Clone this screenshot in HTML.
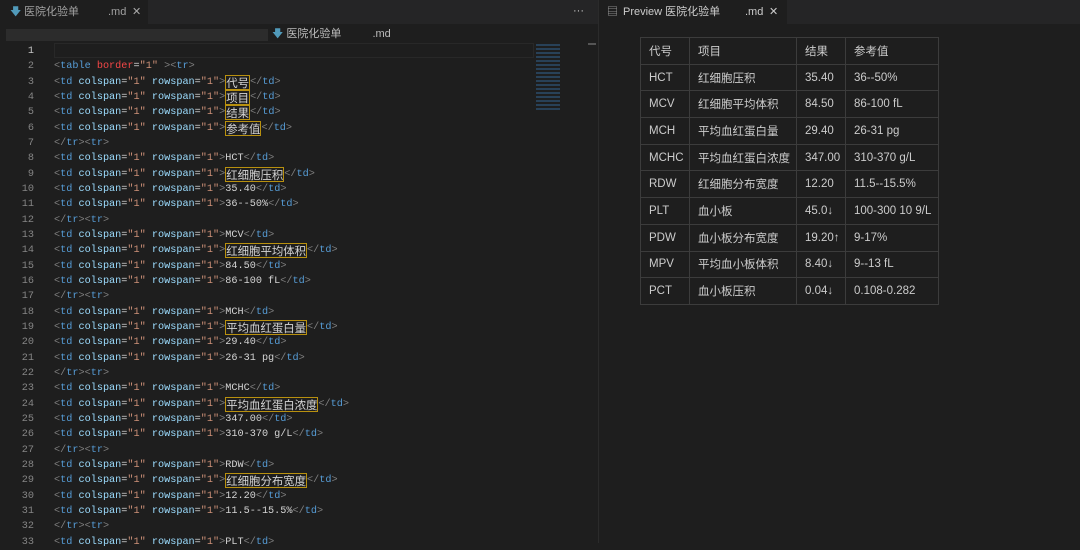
<!DOCTYPE html>
<html><head><meta charset="utf-8"><style>
*{margin:0;padding:0;box-sizing:border-box}
body{width:1080px;height:543px;background:#1e1e1e;overflow:hidden;position:relative;font-family:"Liberation Sans","Noto Sans CJK SC",sans-serif}
.tabbar{position:absolute;left:0;top:0;height:24px;background:#252526}
.tab{position:absolute;top:0;height:24px;background:#1e1e1e;color:#cccccc;font-size:11px;line-height:24px}
.crumb{position:absolute;top:24px;left:0;width:598px;height:19px;background:#1e1e1e}
.code{position:absolute;left:0;top:44px;width:590px;font-family:"Liberation Mono","Noto Sans CJK SC",monospace;font-size:10.2px;line-height:15.33px;color:#d4d4d4;white-space:pre}
.code div{height:15.33px;overflow:visible}
.ln{display:inline-block;width:34px;text-align:right;color:#858585;margin-right:20px}
.b{color:#808080}.t{color:#569cd6}.a{color:#9cdcfe}.s{color:#ce9178}.r{color:#f44747}
.c{display:inline-block;height:15px;line-height:14px;vertical-align:top;font-family:"Noto Sans CJK SC",sans-serif;font-size:11.4px;border:1px solid #b8900f;color:#d4d4d4}
table{position:absolute;left:640px;top:37px;width:298px;table-layout:fixed;border-collapse:collapse;color:#cccccc;font-size:11.5px}
td{border:1px solid #3c3c3c;height:26.7px;padding:0 0 0 8px;white-space:nowrap;overflow:hidden}
</style></head><body>
<div class="tabbar" style="width:598px"></div>
<div class="tabbar" style="left:599px;width:481px"></div>
<div class="tab" style="left:0;width:148px"><span style="color:#519aba;position:absolute;left:10px">&#129095;</span><span style="position:absolute;left:24px;color:#a0a0a0">医院化验单</span><span style="position:absolute;left:108px;color:#a0a0a0">.md</span><span style="position:absolute;left:132px;color:#aaa">✕</span></div>
<div style="position:absolute;left:573px;top:0;color:#ccc;font-size:11px;line-height:22px">···</div>
<div class="tab" style="left:599px;width:188px"><span style="position:absolute;left:8px;color:#aaa">▤</span><span style="position:absolute;left:24px">Preview 医院化验单</span><span style="position:absolute;left:146px">.md</span><span style="position:absolute;left:170px">✕</span></div>
<div class="crumb"></div>
<div style="position:absolute;left:6px;top:29px;width:262px;height:12px;background:#2c2c2c"></div>
<div style="position:absolute;left:272px;top:24px;height:20px;font-size:11px;color:#bbb;line-height:20px"><span style="color:#519aba">&#129095;</span> 医院化验单 <span style="margin-left:28px">.md</span></div>
<div style="position:absolute;left:598px;top:0;width:1px;height:543px;background:#2b2b2b"></div>
<div style="position:absolute;left:536px;top:44px;width:24px;height:66px;background:repeating-linear-gradient(#2a4a66 0 2px,transparent 2px 4px);opacity:.8"></div>
<div style="position:absolute;left:588px;top:43px;width:8px;height:2px;background:#555"></div>
<div style="position:absolute;left:54px;top:43px;width:480px;height:15px;border:1px solid #282828"></div>
<div class="code"><div><span class="ln" style="color:#c6c6c6">1</span></div><div><span class="ln">2</span><span class="b">&lt;</span><span class="t">table</span> <span class="r">border</span>=<span class="s">"1"</span> <span class="b">&gt;&lt;</span><span class="t">tr</span><span class="b">&gt;</span></div><div><span class="ln">3</span><span class="b">&lt;</span><span class="t">td</span> <span class="a">colspan</span>=<span class="s">"1"</span> <span class="a">rowspan</span>=<span class="s">"1"</span><span class="b">&gt;</span><span class="c">代号</span><span class="b">&lt;/</span><span class="t">td</span><span class="b">&gt;</span></div><div><span class="ln">4</span><span class="b">&lt;</span><span class="t">td</span> <span class="a">colspan</span>=<span class="s">"1"</span> <span class="a">rowspan</span>=<span class="s">"1"</span><span class="b">&gt;</span><span class="c">项目</span><span class="b">&lt;/</span><span class="t">td</span><span class="b">&gt;</span></div><div><span class="ln">5</span><span class="b">&lt;</span><span class="t">td</span> <span class="a">colspan</span>=<span class="s">"1"</span> <span class="a">rowspan</span>=<span class="s">"1"</span><span class="b">&gt;</span><span class="c">结果</span><span class="b">&lt;/</span><span class="t">td</span><span class="b">&gt;</span></div><div><span class="ln">6</span><span class="b">&lt;</span><span class="t">td</span> <span class="a">colspan</span>=<span class="s">"1"</span> <span class="a">rowspan</span>=<span class="s">"1"</span><span class="b">&gt;</span><span class="c">参考值</span><span class="b">&lt;/</span><span class="t">td</span><span class="b">&gt;</span></div><div><span class="ln">7</span><span class="b">&lt;/</span><span class="t">tr</span><span class="b">&gt;&lt;</span><span class="t">tr</span><span class="b">&gt;</span></div><div><span class="ln">8</span><span class="b">&lt;</span><span class="t">td</span> <span class="a">colspan</span>=<span class="s">"1"</span> <span class="a">rowspan</span>=<span class="s">"1"</span><span class="b">&gt;</span>HCT<span class="b">&lt;/</span><span class="t">td</span><span class="b">&gt;</span></div><div><span class="ln">9</span><span class="b">&lt;</span><span class="t">td</span> <span class="a">colspan</span>=<span class="s">"1"</span> <span class="a">rowspan</span>=<span class="s">"1"</span><span class="b">&gt;</span><span class="c">红细胞压积</span><span class="b">&lt;/</span><span class="t">td</span><span class="b">&gt;</span></div><div><span class="ln">10</span><span class="b">&lt;</span><span class="t">td</span> <span class="a">colspan</span>=<span class="s">"1"</span> <span class="a">rowspan</span>=<span class="s">"1"</span><span class="b">&gt;</span>35.40<span class="b">&lt;/</span><span class="t">td</span><span class="b">&gt;</span></div><div><span class="ln">11</span><span class="b">&lt;</span><span class="t">td</span> <span class="a">colspan</span>=<span class="s">"1"</span> <span class="a">rowspan</span>=<span class="s">"1"</span><span class="b">&gt;</span>36--50%<span class="b">&lt;/</span><span class="t">td</span><span class="b">&gt;</span></div><div><span class="ln">12</span><span class="b">&lt;/</span><span class="t">tr</span><span class="b">&gt;&lt;</span><span class="t">tr</span><span class="b">&gt;</span></div><div><span class="ln">13</span><span class="b">&lt;</span><span class="t">td</span> <span class="a">colspan</span>=<span class="s">"1"</span> <span class="a">rowspan</span>=<span class="s">"1"</span><span class="b">&gt;</span>MCV<span class="b">&lt;/</span><span class="t">td</span><span class="b">&gt;</span></div><div><span class="ln">14</span><span class="b">&lt;</span><span class="t">td</span> <span class="a">colspan</span>=<span class="s">"1"</span> <span class="a">rowspan</span>=<span class="s">"1"</span><span class="b">&gt;</span><span class="c">红细胞平均体积</span><span class="b">&lt;/</span><span class="t">td</span><span class="b">&gt;</span></div><div><span class="ln">15</span><span class="b">&lt;</span><span class="t">td</span> <span class="a">colspan</span>=<span class="s">"1"</span> <span class="a">rowspan</span>=<span class="s">"1"</span><span class="b">&gt;</span>84.50<span class="b">&lt;/</span><span class="t">td</span><span class="b">&gt;</span></div><div><span class="ln">16</span><span class="b">&lt;</span><span class="t">td</span> <span class="a">colspan</span>=<span class="s">"1"</span> <span class="a">rowspan</span>=<span class="s">"1"</span><span class="b">&gt;</span>86-100 fL<span class="b">&lt;/</span><span class="t">td</span><span class="b">&gt;</span></div><div><span class="ln">17</span><span class="b">&lt;/</span><span class="t">tr</span><span class="b">&gt;&lt;</span><span class="t">tr</span><span class="b">&gt;</span></div><div><span class="ln">18</span><span class="b">&lt;</span><span class="t">td</span> <span class="a">colspan</span>=<span class="s">"1"</span> <span class="a">rowspan</span>=<span class="s">"1"</span><span class="b">&gt;</span>MCH<span class="b">&lt;/</span><span class="t">td</span><span class="b">&gt;</span></div><div><span class="ln">19</span><span class="b">&lt;</span><span class="t">td</span> <span class="a">colspan</span>=<span class="s">"1"</span> <span class="a">rowspan</span>=<span class="s">"1"</span><span class="b">&gt;</span><span class="c">平均血红蛋白量</span><span class="b">&lt;/</span><span class="t">td</span><span class="b">&gt;</span></div><div><span class="ln">20</span><span class="b">&lt;</span><span class="t">td</span> <span class="a">colspan</span>=<span class="s">"1"</span> <span class="a">rowspan</span>=<span class="s">"1"</span><span class="b">&gt;</span>29.40<span class="b">&lt;/</span><span class="t">td</span><span class="b">&gt;</span></div><div><span class="ln">21</span><span class="b">&lt;</span><span class="t">td</span> <span class="a">colspan</span>=<span class="s">"1"</span> <span class="a">rowspan</span>=<span class="s">"1"</span><span class="b">&gt;</span>26-31 pg<span class="b">&lt;/</span><span class="t">td</span><span class="b">&gt;</span></div><div><span class="ln">22</span><span class="b">&lt;/</span><span class="t">tr</span><span class="b">&gt;&lt;</span><span class="t">tr</span><span class="b">&gt;</span></div><div><span class="ln">23</span><span class="b">&lt;</span><span class="t">td</span> <span class="a">colspan</span>=<span class="s">"1"</span> <span class="a">rowspan</span>=<span class="s">"1"</span><span class="b">&gt;</span>MCHC<span class="b">&lt;/</span><span class="t">td</span><span class="b">&gt;</span></div><div><span class="ln">24</span><span class="b">&lt;</span><span class="t">td</span> <span class="a">colspan</span>=<span class="s">"1"</span> <span class="a">rowspan</span>=<span class="s">"1"</span><span class="b">&gt;</span><span class="c">平均血红蛋白浓度</span><span class="b">&lt;/</span><span class="t">td</span><span class="b">&gt;</span></div><div><span class="ln">25</span><span class="b">&lt;</span><span class="t">td</span> <span class="a">colspan</span>=<span class="s">"1"</span> <span class="a">rowspan</span>=<span class="s">"1"</span><span class="b">&gt;</span>347.00<span class="b">&lt;/</span><span class="t">td</span><span class="b">&gt;</span></div><div><span class="ln">26</span><span class="b">&lt;</span><span class="t">td</span> <span class="a">colspan</span>=<span class="s">"1"</span> <span class="a">rowspan</span>=<span class="s">"1"</span><span class="b">&gt;</span>310-370 g/L<span class="b">&lt;/</span><span class="t">td</span><span class="b">&gt;</span></div><div><span class="ln">27</span><span class="b">&lt;/</span><span class="t">tr</span><span class="b">&gt;&lt;</span><span class="t">tr</span><span class="b">&gt;</span></div><div><span class="ln">28</span><span class="b">&lt;</span><span class="t">td</span> <span class="a">colspan</span>=<span class="s">"1"</span> <span class="a">rowspan</span>=<span class="s">"1"</span><span class="b">&gt;</span>RDW<span class="b">&lt;/</span><span class="t">td</span><span class="b">&gt;</span></div><div><span class="ln">29</span><span class="b">&lt;</span><span class="t">td</span> <span class="a">colspan</span>=<span class="s">"1"</span> <span class="a">rowspan</span>=<span class="s">"1"</span><span class="b">&gt;</span><span class="c">红细胞分布宽度</span><span class="b">&lt;/</span><span class="t">td</span><span class="b">&gt;</span></div><div><span class="ln">30</span><span class="b">&lt;</span><span class="t">td</span> <span class="a">colspan</span>=<span class="s">"1"</span> <span class="a">rowspan</span>=<span class="s">"1"</span><span class="b">&gt;</span>12.20<span class="b">&lt;/</span><span class="t">td</span><span class="b">&gt;</span></div><div><span class="ln">31</span><span class="b">&lt;</span><span class="t">td</span> <span class="a">colspan</span>=<span class="s">"1"</span> <span class="a">rowspan</span>=<span class="s">"1"</span><span class="b">&gt;</span>11.5--15.5%<span class="b">&lt;/</span><span class="t">td</span><span class="b">&gt;</span></div><div><span class="ln">32</span><span class="b">&lt;/</span><span class="t">tr</span><span class="b">&gt;&lt;</span><span class="t">tr</span><span class="b">&gt;</span></div><div><span class="ln">33</span><span class="b">&lt;</span><span class="t">td</span> <span class="a">colspan</span>=<span class="s">"1"</span> <span class="a">rowspan</span>=<span class="s">"1"</span><span class="b">&gt;</span>PLT<span class="b">&lt;/</span><span class="t">td</span><span class="b">&gt;</span></div></div>
<table>
<colgroup><col style="width:49px"><col style="width:107px"><col style="width:49px"><col style="width:93px"></colgroup>
<tr><td>代号</td><td>项目</td><td>结果</td><td>参考值</td></tr>
<tr><td>HCT</td><td>红细胞压积</td><td>35.40</td><td>36--50%</td></tr>
<tr><td>MCV</td><td>红细胞平均体积</td><td>84.50</td><td>86-100 fL</td></tr>
<tr><td>MCH</td><td>平均血红蛋白量</td><td>29.40</td><td>26-31 pg</td></tr>
<tr><td>MCHC</td><td>平均血红蛋白浓度</td><td>347.00</td><td>310-370 g/L</td></tr>
<tr><td>RDW</td><td>红细胞分布宽度</td><td>12.20</td><td>11.5--15.5%</td></tr>
<tr><td>PLT</td><td>血小板</td><td>45.0↓</td><td>100-300 10 9/L</td></tr>
<tr><td>PDW</td><td>血小板分布宽度</td><td>19.20↑</td><td>9-17%</td></tr>
<tr><td>MPV</td><td>平均血小板体积</td><td>8.40↓</td><td>9--13 fL</td></tr>
<tr><td>PCT</td><td>血小板压积</td><td>0.04↓</td><td>0.108-0.282</td></tr>
</table>
</body></html>
